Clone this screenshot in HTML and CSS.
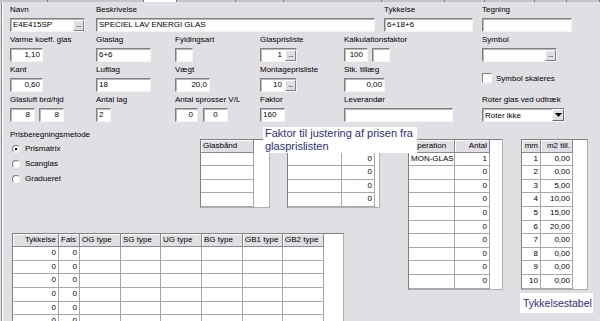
FILE: index.html
```html
<!DOCTYPE html>
<html lang="da">
<head>
  <meta charset="UTF-8" />
  <title>Glastype</title>
  <link rel="stylesheet" href="styles.css">
</head>
<body>
<div class="panel">
  <div class="tabs">
    <span></span><span></span><span class="sel"></span><span></span><span></span><span></span>
    <span></span><span></span><span></span><span></span><span></span>
  </div>

  <div class="form">
    <!-- række 1 -->
    <div class="field">
      <label>Navn</label>
      <div class="edit w75 btn"><span class="txt">E4E415SP</span><span class="dots">...</span></div>
    </div>
    <div class="field span4">
      <label>Beskrivelse</label>
      <div class="edit w279">SPECIEL LAV ENERGI GLAS</div>
    </div>
    <div class="field">
      <label>Tykkelse</label>
      <div class="edit w89">6+18+6</div>
    </div>
    <div class="field">
      <label>Tegning</label>
      <div class="edit w90"></div>
    </div>

    <!-- række 2 -->
    <div class="field">
      <label>Varme koeff. glas</label>
      <div class="edit w33 num">1,10</div>
    </div>
    <div class="field">
      <label>Glaslag</label>
      <div class="edit w55">6+6</div>
    </div>
    <div class="field">
      <label>Fyldingsart</label>
      <div class="edit w18"></div>
    </div>
    <div class="field">
      <label>Glasprisliste</label>
      <div class="edit w37 btn num"><span class="txt">1</span><span class="dots">...</span></div>
    </div>
    <div class="field span2">
      <label>Kalkulationsfaktor</label>
      <div class="pair">
        <div class="edit w24 num pad4">100</div>
        <div class="edit w18"></div>
      </div>
    </div>
    <div class="field">
      <label>Symbol</label>
      <div class="edit w75 btn"><span class="txt"></span><span class="dots">...</span></div>
    </div>

    <!-- række 3 -->
    <div class="field">
      <label>Kant</label>
      <div class="edit w33 num">0,60</div>
    </div>
    <div class="field">
      <label>Luftlag</label>
      <div class="edit w55">18</div>
    </div>
    <div class="field">
      <label>Vægt</label>
      <div class="edit w35 num">20,0</div>
    </div>
    <div class="field">
      <label>Montageprisliste</label>
      <div class="edit w37 btn num"><span class="txt">10</span><span class="dots">...</span></div>
    </div>
    <div class="field span2">
      <label>Stk. tillæg</label>
      <div class="edit w41 num">0,00</div>
    </div>
    <div class="field">
      <div class="check"><span class="box"></span>Symbol skaleres</div>
    </div>

    <!-- række 4 -->
    <div class="field">
      <label>Glasluft brd/hjd</label>
      <div class="pair">
        <div class="edit w25 num pad4">8</div>
        <div class="edit w25 num pad4">8</div>
      </div>
    </div>
    <div class="field">
      <label>Antal lag</label>
      <div class="edit w15">2</div>
    </div>
    <div class="field">
      <label>Antal sprosser V/L</label>
      <div class="pair wide">
        <div class="edit w23 num pad4">0</div>
        <div class="edit w25 mid">0</div>
      </div>
    </div>
    <div class="field">
      <label>Faktor</label>
      <div class="edit w25">160</div>
    </div>
    <div class="field span2">
      <label>Leverandør</label>
      <div class="edit w109"></div>
    </div>
    <div class="field">
      <label>Roter glas ved udtræk</label>
      <div class="combo">
        <span class="txt">Roter ikke</span>
        <span class="arrow"><svg width="7" height="4" viewBox="0 0 7 4"><polygon points="0,0 7,0 3.5,4" fill="#000"/></svg></span>
      </div>
    </div>
  </div>

  <div class="lower">
    <div class="left">
      <div class="upper">
        <div class="method">
          <div class="cap">Prisberegningsmetode</div>
          <div class="radio on"><i></i>Prismatrix</div>
          <div class="radio"><i></i>Scanglas</div>
          <div class="radio"><i></i>Gradueret</div>
        </div>

        <div class="grid band">
          <div class="r hd"><span>Glasbånd</span></div>
          <div class="r"><span></span></div>
          <div class="r"><span></span></div>
          <div class="r"><span></span></div>
          <div class="r"><span></span></div>
        </div>

        <!-- overskriften ligger skjult under værktøjstippet -->
        <div class="grid extra">
          <div class="r hd"><span></span><span></span></div>
          <div class="r"><span></span><span class="n">0</span></div>
          <div class="r"><span></span><span class="n">0</span></div>
          <div class="r"><span></span><span class="n">0</span></div>
          <div class="r"><span></span><span class="n">0</span></div>
        </div>
      </div>

      <div class="grid glas">
        <div class="r hd">
          <span class="n">Tykkelse</span><span>Fals</span><span>OG type</span><span>SG type</span>
          <span>UG type</span><span>BG type</span><span>GB1 type</span><span>GB2 type</span>
        </div>
        <div class="r"><span class="n">0</span><span class="n">0</span><span></span><span></span><span></span><span></span><span></span><span></span></div>
        <div class="r"><span class="n">0</span><span class="n">0</span><span></span><span></span><span></span><span></span><span></span><span></span></div>
        <div class="r"><span class="n">0</span><span class="n">0</span><span></span><span></span><span></span><span></span><span></span><span></span></div>
        <div class="r"><span class="n">0</span><span class="n">0</span><span></span><span></span><span></span><span></span><span></span><span></span></div>
        <div class="r"><span class="n">0</span><span class="n">0</span><span></span><span></span><span></span><span></span><span></span><span></span></div>
        <div class="r"><span class="n">0</span><span class="n">0</span><span></span><span></span><span></span><span></span><span></span><span></span></div>
      </div>
    </div>

    <div class="right">
      <div class="tables">
        <div class="grid ops">
          <div class="r hd"><span>Operation</span><span class="n">Antal</span></div>
          <div class="r"><span>MON-GLAS</span><span class="n">1</span></div>
          <div class="r"><span></span><span class="n">0</span></div>
          <div class="r"><span></span><span class="n">0</span></div>
          <div class="r"><span></span><span class="n">0</span></div>
          <div class="r"><span></span><span class="n">0</span></div>
          <div class="r"><span></span><span class="n">0</span></div>
          <div class="r"><span></span><span class="n">0</span></div>
          <div class="r"><span></span><span class="n">0</span></div>
          <div class="r"><span></span><span class="n">0</span></div>
          <div class="r"><span></span><span class="n">0</span></div>
        </div>

        <div class="grid tyk">
          <div class="r hd"><span class="n">mm</span><span class="n">m2 till.</span></div>
          <div class="r"><span class="n">1</span><span class="n">0,00</span></div>
          <div class="r"><span class="n">2</span><span class="n">0,00</span></div>
          <div class="r"><span class="n">3</span><span class="n">5,00</span></div>
          <div class="r"><span class="n">4</span><span class="n">10,00</span></div>
          <div class="r"><span class="n">5</span><span class="n">15,00</span></div>
          <div class="r"><span class="n">6</span><span class="n">20,00</span></div>
          <div class="r"><span class="n">7</span><span class="n">0,00</span></div>
          <div class="r"><span class="n">8</span><span class="n">0,00</span></div>
          <div class="r"><span class="n">9</span><span class="n">0,00</span></div>
          <div class="r"><span class="n">10</span><span class="n">0,00</span></div>
        </div>
      </div>
      <div class="hint">Tykkelsestabel</div>
    </div>
  </div>

  <div class="tip">Faktor til justering af prisen fra<br>glasprislisten</div>
</div>
</body>
</html>
```

FILE: styles.css
```css
* {
  box-sizing: border-box;
}
body {
  margin: 0;
  background: #e0dfe3;
  font-family: "Liberation Sans", Arial, sans-serif;
  font-size: 8px;
  color: #000;
}
.panel {
  position: relative;
  width: 600px;
  height: 321px;
  overflow: hidden;
  background: #e0dfe3;
  box-shadow: inset 1px 0 0 #e0dfe3, inset 2px 0 0 #8a8a8a, inset 3px 0 0 #fff;
}

/* fanebladenes underkant */
.tabs {
  display: grid;
  grid-template-columns: 48px 96px 33px 59px 48px 98px 63px 40px 50px 32px 1fr;
  height: 4px;
}
.tabs span {
  height: 2px;
  background: #c4c3c8;
  border-right: 1px solid #7a7a7a;
}
.tabs span.sel {
  background: #fff;
}

/* felter */
.form {
  display: grid;
  grid-template-columns: 86px 79px 85px 84px 40px 98px 1fr;
  row-gap: 2px;
  padding-left: 10px;
}
.field {
  display: flex;
  flex-direction: column;
  align-items: flex-start;
}
.span4 { grid-column: span 4; }
.span2 { grid-column: span 2; }
.field label {
  height: 11px;
  line-height: 11px;
  margin-bottom: 3px;
  white-space: nowrap;
}
.edit {
  display: flex;
  align-items: center;
  height: 14px;
  padding: 0 2px;
  background: #fff;
  border: 1px solid;
  border-color: #808080 #f4f4f4 #f4f4f4 #808080;
  box-shadow: inset 1px 1px 0 #b8b8b8;
  line-height: 12px;
  white-space: nowrap;
  overflow: hidden;
}
.edit.num { justify-content: flex-end; }
.edit.pad4 { padding-right: 4px; }
.edit.mid { justify-content: center; }
.edit .txt { flex: 1; }
.edit.num .txt { text-align: right; padding-right: 3px; }
.edit.btn { padding-right: 0; }
.dots {
  width: 11px;
  height: 11px;
  background: #e0dfe3;
  border: 1px solid;
  border-color: #fff #808080 #808080 #fff;
  font-size: 8px;
  line-height: 8px;
  text-align: center;
  letter-spacing: -0.5px;
}
.w15 { width: 15px; }
.w18 { width: 18px; }
.w23 { width: 23px; }
.w24 { width: 24px; }
.w25 { width: 25px; }
.w33 { width: 33px; }
.w35 { width: 35px; }
.w37 { width: 37px; }
.w41 { width: 41px; }
.w55 { width: 55px; }
.w75 { width: 75px; }
.w89 { width: 89px; }
.w90 { width: 90px; }
.w109 { width: 109px; }
.w279 { width: 279px; }
.pair {
  display: flex;
  gap: 4px;
}
.pair.wide { gap: 5px; }

.combo {
  display: flex;
  align-items: center;
  width: 83px;
  height: 14px;
  padding-left: 2px;
  background: #fff;
  border: 1px solid;
  border-color: #808080 #f4f4f4 #f4f4f4 #808080;
  box-shadow: inset 1px 1px 0 #b8b8b8;
}
.combo .txt { flex: 1; }
.combo .arrow {
  display: flex;
  align-items: center;
  justify-content: center;
  width: 12px;
  height: 12px;
  background: #e0dfe3;
  border: 1px solid;
  border-color: #fff #6a6a6a #6a6a6a #fff;
}

.check {
  display: flex;
  align-items: center;
  gap: 4px;
  margin-top: 9px;
}
.check .box {
  width: 10px;
  height: 10px;
  background: #fff;
  border: 1px solid;
  border-color: #808080 #f4f4f4 #f4f4f4 #808080;
}

/* nederste del */
.lower {
  display: flex;
}
.left { width: 408px; }
.upper {
  display: flex;
  align-items: flex-start;
  height: 111px;
}
.method {
  width: 200px;
  padding: 7px 0 0 10px;
}
.cap {
  height: 11px;
  line-height: 11px;
  margin-bottom: 1px;
}
.radio {
  display: flex;
  align-items: center;
  height: 15px;
}
.radio i {
  position: relative;
  width: 8px;
  height: 8px;
  margin: 0 5px 0 2px;
  border-radius: 50%;
  background: #fff;
  border: 1px solid;
  border-color: #7a7a7a #f4f4f4 #f4f4f4 #7a7a7a;
}
.radio.on i::after {
  content: "";
  position: absolute;
  left: 2px;
  top: 2px;
  width: 2px;
  height: 2px;
  background: #000;
}

/* tabeller */
.grid {
  background: #fff;
  border: 1px solid;
  border-color: #808080 #b0b0b0 #b0b0b0 #808080;
  overflow: hidden;
}
.grid .r {
  display: grid;
  height: 13.6px;
}
.grid .r span {
  padding: 0 2px;
  line-height: 12.6px;
  white-space: nowrap;
  overflow: hidden;
  border-right: 1px solid #a8a8a8;
  border-bottom: 1px solid #a8a8a8;
}
.grid .r.hd { height: 12.6px; }
.grid .r.hd span {
  line-height: 11.6px;
  background: #e0dfe3;
  border-color: #8a8a8a;
  box-shadow: inset 1px 1px 0 #fff;
}
.grid .n { text-align: right; }

.band {
  width: 70px;
  margin-top: 17px;
}
.band .r { grid-template-columns: 53px; }
.extra {
  width: 93px;
  margin: 17px 0 0 17px;
}
.extra .r { grid-template-columns: 54px 33px; }
.glas {
  width: 332px;
  margin-left: 12px;
}
.glas .r { height: 13.7px; grid-template-columns: 46px 21px 41px 40px 41px 41px 40px 41px; }
.glas .r.hd { height: 13px; }

.tables {
  display: flex;
  align-items: flex-start;
  padding-top: 17px;
}
.ops { width: 95px; }
.ops .r { grid-template-columns: 46px 35px; }
.tyk {
  width: 67px;
  margin-left: 18px;
}
.tyk .r { grid-template-columns: 19px 32px; }

.hint {
  width: 73px;
  height: 20px;
  margin: 3px 0 0 112px;
  padding-left: 3px;
  background: #fff;
  color: #2c2c80;
  font-size: 10.5px;
  line-height: 20px;
  white-space: nowrap;
}

/* værktøjstip */
.tip {
  position: absolute;
  left: 263px;
  top: 127px;
  width: 154px;
  height: 26px;
  padding-left: 2px;
  background: #fff;
  color: #2c2c80;
  font-size: 11px;
  line-height: 13px;
  white-space: nowrap;
}
```
